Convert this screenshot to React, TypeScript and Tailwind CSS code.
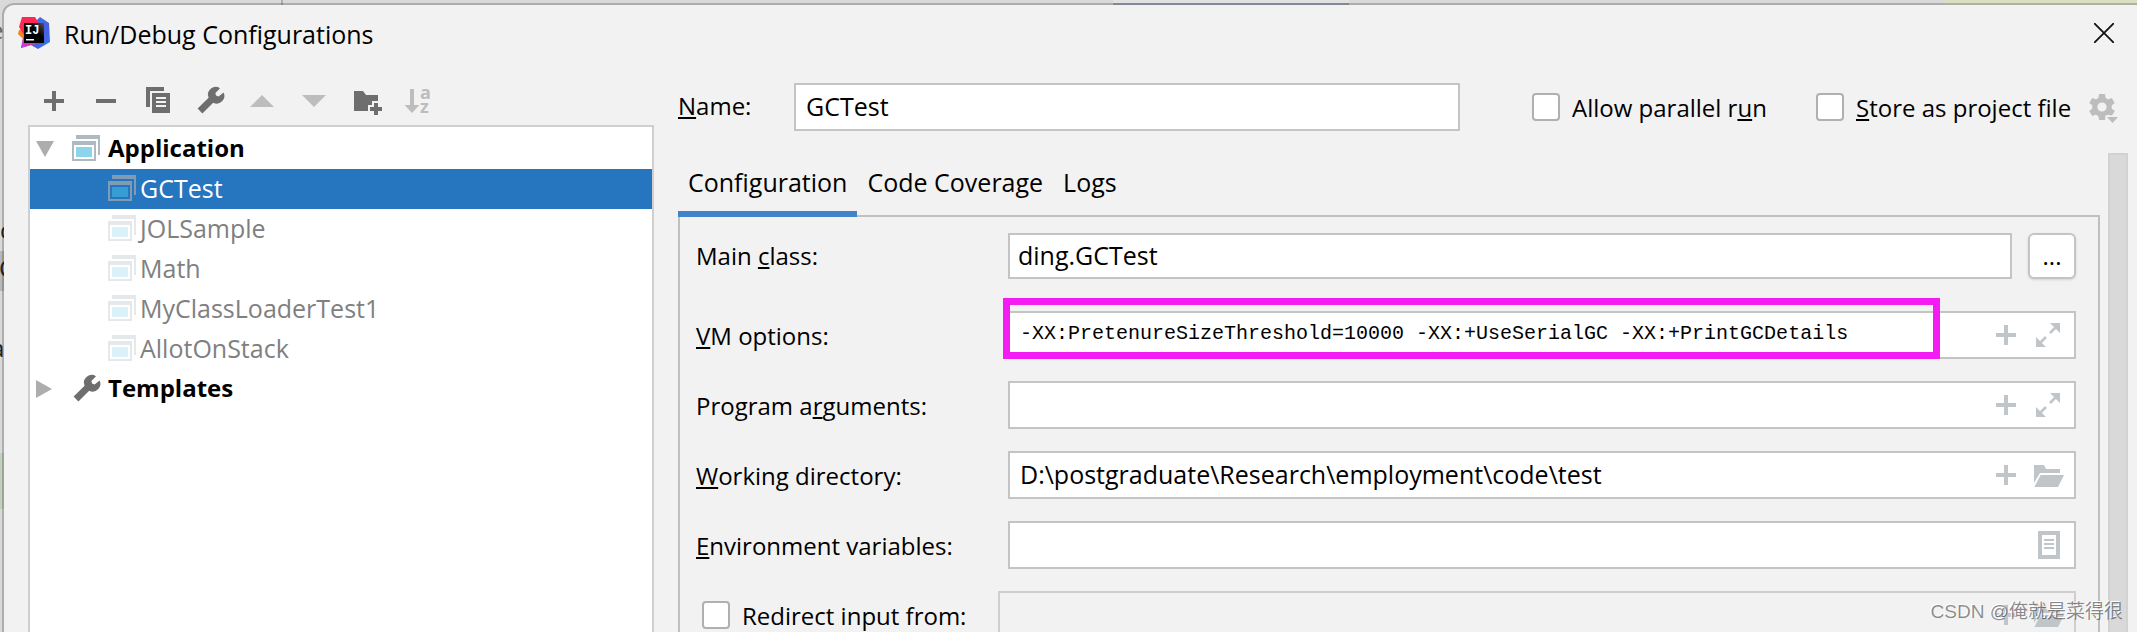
import type { ReactNode } from "react";

type IconProps = { className?: string; children: ReactNode };

function Icon({ className = "text-[#6e6e6e]", children }: IconProps) {
    return (
        <svg className={`w-8 h-8 shrink-0 ${className}`} viewBox="0 0 16 16" fill="currentColor" aria-hidden="true">
            {children}
        </svg>
    );
}

const plusPath = <path d="M7 3h2v4h4v2H9v4H7V9H3V7h4z" />;
const wrenchPath = <path d="M13 1.6 10.7 4l.3 1.3 1.3.4L14.8 3.7A3.9 3.9 0 0 1 9.6 8.9L4.2 14.2 1.8 11.8 7.3 6.4A3.9 3.9 0 0 1 13 1.6z" />;
const openFolderPath = <path d="M1 3h5l1 2h7v2H4L1 12zM4.3 8H16l-3 6H1.2z" />;

function AppIcon({ className = "" }: { className?: string }) {
    return (
        <Icon className={`text-[#aebac1] ${className}`}>
            <path d="M3 1h12v10h-1V3H3zM1 4h12v10H1zM2 6v7h10V6z" fillRule="evenodd" />
            <path d="M3 7h8v5H3z" fill="#40b6e0" fillOpacity="0.6" />
        </Icon>
    );
}

function SelectedAppIcon() {
    return (
        <Icon className="text-[#7f9bb5]">
            <path d="M3 1h12v10h-1V3H3zM1 4h12v10H1zM2 6v7h10V6z" fillRule="evenodd" />
            <path d="M3 7h8v5H3z" fill="#369cd3" />
        </Icon>
    );
}

function Logo() {
    return (
        <svg className="w-8 h-8 shrink-0" viewBox="0 0 32 32" aria-hidden="true">
            <defs>
                <linearGradient id="blue" x1="0" y1="0" x2="1" y2="1">
                    <stop offset="0" stopColor="#3b7bea" />
                    <stop offset="0.6" stopColor="#4a5fe0" />
                    <stop offset="1" stopColor="#2a7df0" />
                </linearGradient>
                <linearGradient id="purple" x1="0" y1="1" x2="1" y2="0">
                    <stop offset="0" stopColor="#b345f1" />
                    <stop offset="1" stopColor="#fe2857" />
                </linearGradient>
                <linearGradient id="black" x1="0" y1="1" x2="1" y2="0">
                    <stop offset="0" stopColor="#000" />
                    <stop offset="0.6" stopColor="#000" />
                    <stop offset="1" stopColor="#555" />
                </linearGradient>
            </defs>
            <path d="M17 5 22 0l9 6 1 19-12 7-9-5z" fill="url(#blue)" />
            <path d="M3 31 6 20 10 24l9 6-4-3z" fill="#a43fd0" />
            <path d="M1 13 8 11v12L3 20 0 17z" fill="#fc801d" />
            <path d="M4 0h13l5 8-6 12L6 18 1 10z" fill="#fe2857" />
            <path d="M3 31 5 20l6-2 6 9z" fill="url(#purple)" />
            <path d="M6 6h20v20H6z" fill="url(#black)" />
            <path d="M8 22h8v1.500H8z" fill="#fff" />
            <text x="7" y="17" fontSize="12" fontWeight="700" fill="#fff" fontFamily="Liberation Mono, monospace">IJ</text>
        </svg>
    );
}

function Tools() {
    return (
        <div className="flex flex-row gap-5 pl-[10px] pb-2">
            <button aria-label="Add"><Icon>{plusPath}</Icon></button>
            <button aria-label="Remove"><Icon><path d="M3 7h10v2H3z" /></Icon></button>
            <button aria-label="Copy">
                <Icon>
                    <path d="M2 1h9v2H4v8H2zM5 4h9v10H5zM7 6v1h5V6zM7 8v1h5V8zM7 10v1h5v-1z" fillRule="evenodd" />
                </Icon>
            </button>
            <button aria-label="Edit templates"><Icon>{wrenchPath}</Icon></button>
            <button aria-label="Move up"><Icon className="text-[#bdbdbd]"><path d="M2 11h12L8 5z" /></Icon></button>
            <button aria-label="Move down"><Icon className="text-[#bdbdbd]"><path d="M2 5h12l-6 6z" /></Icon></button>
            <button aria-label="New folder">
                <Icon>
                    <path d="M2 3h4.500L8 5h6v3h-3v2H9v3H2zM12 9h2v2h2v2h-2v2h-2v-2h-2v-2h2z" />
                </Icon>
            </button>
            <button aria-label="Sort">
                <Icon className="text-[#bdbdbd]">
                    <path d="M4 2h2v8h2.700L5 14 1.300 10H4z" />
                    <text x="9" y="7.200" fontSize="9" fontWeight="700" fontFamily="Open Sans, sans-serif">a</text>
                    <text x="9" y="14" fontSize="9" fontWeight="700" fontFamily="Open Sans, sans-serif">z</text>
                </Icon>
            </button>
        </div>
    );
}

const configs = ["GCTest", "JOLSample", "Math", "MyClassLoaderTest1", "AllotOnStack"];

function Tree() {
    return (
        <ul className="flex-1 bg-white border-2 border-[#cfcfcf] pt-[2px]">
            <li className="h-10 flex flex-row items-center pl-[6px] font-bold">
                <svg className="w-[18px] h-4 mr-4" viewBox="0 0 18 16" aria-hidden="true"><path d="M0 0h18L9 16z" fill="#adadad" /></svg>
                <AppIcon />
                <span className="pl-[6px] pb-[2px]">Application</span>
            </li>
            {configs.map((name, i) => (
                <li key={name} className={i === 0 ? "h-10 flex flex-row items-center pl-[76px] bg-[#2675bf] text-white" : "h-10 flex flex-row items-center pl-[76px] text-[#808080]"}>
                    {i === 0 ? <SelectedAppIcon /> : <AppIcon className="opacity-30" />}
                    <span className="pl-[2px] pb-[2px] text-[25px]">{name}</span>
                </li>
            ))}
            <li className="h-10 flex flex-row items-center pl-[6px] font-bold">
                <svg className="w-4 h-[18px] mr-[18px]" viewBox="0 0 16 18" aria-hidden="true"><path d="M0 0v18l16-9z" fill="#adadad" /></svg>
                <Icon>{wrenchPath}</Icon>
                <span className="pl-[6px] pb-[2px]">Templates</span>
            </li>
        </ul>
    );
}

// underlined mnemonic letter
function Key({ children }: { children: string }) {
    return <u className="decoration-2 underline-offset-2 [text-decoration-skip-ink:none]">{children}</u>;
}

const checkbox = "appearance-none w-7 h-7 shrink-0 bg-white border-2 border-[#b0b0b0] rounded";

type FieldProps = { id: string; label: ReactNode; value?: string; mono?: boolean; note?: ReactNode; children: ReactNode };

function Field({ id, label, value = "", mono = false, note, children }: FieldProps) {
    return (
        <div className="flex flex-row items-center">
            <label htmlFor={id} className="w-[312px] shrink-0 pt-[2px]">{label}</label>
            <div className="relative flex-1 h-12 flex flex-row items-center gap-[10px] bg-white border-2 border-[#c4c4c4] pl-[10px] pr-[10px]">
                <input id={id} className={mono ? "flex-1 min-w-0 pb-[2px] outline-none font-['Liberation_Mono',monospace] text-[20px]" : "flex-1 min-w-0 pb-[2px] outline-none text-[25px]"} defaultValue={value} />
                {children}
                {note}
            </div>
        </div>
    );
}

const pale = "text-[#bfc5c9]";

function AddButton() {
    return <button type="button" aria-label="Insert macro"><Icon className={pale}>{plusPath}</Icon></button>;
}

function ExpandButton() {
    return (
        <button type="button" aria-label="Expand">
            <Icon className={pale}>
                <path d="M9 2h5v5zM2 9v5h5z" />
                <path d="M9 7l3-3M7 9l-3 3" stroke="currentColor" strokeWidth="1.300" />
            </Icon>
        </button>
    );
}

function BrowseButton() {
    return <button type="button" aria-label="Browse"><Icon className={pale}>{openFolderPath}</Icon></button>;
}

function Panel() {
    return (
        <form className="flex-1 -mt-[2px] flex flex-col border-2 border-b-0 border-[#c0c0c0] pt-4 pl-4 pr-[22px]">
            <div className="flex flex-row items-center mb-8">
                <label htmlFor="main" className="w-[312px] shrink-0">Main <Key>c</Key>lass:</label>
                <input id="main" className="flex-1 h-[46px] bg-white border-2 border-[#c4c4c4] px-2 pb-[2px] outline-none text-[25px]" defaultValue="ding.GCTest" />
                <button type="button" className="ml-4 w-12 h-[46px] bg-white border-2 border-[#c4c4c4] rounded-md shadow-sm">...</button>
            </div>
            <div className="flex flex-col gap-[22px]">
                <Field
                    id="vm"
                    label={<><Key>V</Key>M options:</>}
                    value="-XX:PretenureSizeThreshold=10000 -XX:+UseSerialGC -XX:+PrintGCDetails"
                    mono
                    note={<div className="absolute -left-[7px] -top-[15px] right-[134px] -bottom-[2px] border-[7px] border-[#f31cf3] pointer-events-none" />}
                >
                    <AddButton />
                    <ExpandButton />
                </Field>
                <Field id="args" label={<>Program a<Key>r</Key>guments:</>}>
                    <AddButton />
                    <ExpandButton />
                </Field>
                <Field id="dir" label={<><Key>W</Key>orking directory:</>} value="D:\postgraduate\Research\employment\code\test">
                    <AddButton />
                    <BrowseButton />
                </Field>
                <Field id="env" label={<><Key>E</Key>nvironment variables:</>}>
                    <button type="button" aria-label="Edit variables">
                        <Icon className={pale}>
                            <path d="M3 1h11v14H3zM5 3v10h7V3zM6 5h5v1H6zM6 7h5v1H6zM6 9h5v1H6z" fillRule="evenodd" />
                        </Icon>
                    </button>
                </Field>
                <div className="flex flex-row items-center">
                    <label className="w-[302px] shrink-0 flex flex-row items-center gap-3 pl-[6px]">
                        <input type="checkbox" className={checkbox} />
                        <span className="pt-[2px]">Redirect input from:</span>
                    </label>
                    <div className="flex-1 h-12 flex flex-row items-center gap-[10px] border-2 border-[#cfcfcf] px-[10px]">
                        <input aria-label="Redirect input from" className="flex-1 min-w-0" disabled />
                        <AddButton />
                        <BrowseButton />
                    </div>
                </div>
            </div>
        </form>
    );
}

function Gear() {
    return (
        <Icon className="text-[#bdbdbd]">
            <circle cx="8" cy="8" r="3.600" fill="none" stroke="currentColor" strokeWidth="2.600" />
            {[0, 60, 120, 180, 240, 300].map((a) => (
                <path key={a} d="M6.500 1.500h3l.4 3H6.100z" transform={`rotate(${a} 8 8)`} />
            ))}
            <path d="M9.500 12.300H16V16h-4z" fill="#f2f2f2" />
            <path d="M10.500 13H16l-2.750 3z" />
        </Icon>
    );
}

function Editor() {
    return (
        <div className="flex-1 flex flex-col pt-[22px]">
            <div className="flex flex-row items-center pr-[19px]">
                <label htmlFor="name" className="w-[116px] shrink-0 pb-[2px]"><Key>N</Key>ame:</label>
                <input id="name" className="flex-1 h-12 bg-white border-2 border-[#c4c4c4] px-[10px] pb-[2px] outline-none text-[25px]" defaultValue="GCTest" />
                <label className="ml-[72px] w-[284px] flex flex-row items-center gap-3">
                    <input type="checkbox" className={checkbox} />
                    <span className="pt-[2px]">Allow parallel r<Key>u</Key>n</span>
                </label>
                <label className="w-[270px] flex flex-row items-center gap-3">
                    <input type="checkbox" className={checkbox} />
                    <span className="pt-[2px] whitespace-nowrap"><Key>S</Key>tore as project file</span>
                </label>
                <button aria-label="Storage options"><Gear /></button>
            </div>
            <div className="flex-1 flex flex-row gap-2 mt-[22px] pr-[9px]">
                <div className="flex-1 flex flex-col">
                    <div className="relative flex flex-row text-[25px]" role="tablist">
                        <button role="tab" aria-selected="true" className="h-16 px-[10px] border-b-[6px] border-[#4083c9]">Configuration</button>
                        <button role="tab" aria-selected="false" className="h-16 px-[10px] border-b-[6px] border-transparent">Code Coverage</button>
                        <button role="tab" aria-selected="false" className="h-16 px-[10px] border-b-[6px] border-transparent">Logs</button>
                    </div>
                    <Panel />
                </div>
                <div className="w-5 bg-[#d9d9d9] border-2 border-b-0 border-[#d2d2d2]" />
            </div>
        </div>
    );
}

// the slice of the editor window that shows past the dialog's edge
function Backdrop() {
    return (
        <div className="absolute inset-0 overflow-hidden bg-[#d9d9d9] text-[#222222]" aria-hidden="true">
            <div className="absolute left-[1113px] top-0 w-[236px] h-[5px] bg-[#e1e1e1] border-b-2 border-[#a3abbc]" />
            <div className="absolute left-[1943px] right-0 top-0 h-2 bg-[#dbdec4]" />
            <div className="absolute left-[281px] top-0 w-[2px] h-2 bg-[#b0b0b0]" />
            <div className="absolute left-0 top-[251px] w-1 h-10 bg-[#b8b8b8]" />
            <div className="absolute left-0 top-[453px] w-1 h-14 bg-[#c3d0bd]" />
            <span className="absolute -left-[10px] top-[14px] text-[#666666]">e</span>
            <span className="absolute left-0 top-[214px]">c</span>
            <span className="absolute -left-[1px] top-[252px]">C</span>
            <span className="absolute -left-[9px] top-[332px]">a</span>
        </div>
    );
}

export default function App() {
    return (
        <div className="relative h-screen overflow-hidden pl-[2px] pt-[3px] flex font-['Open_Sans','Noto_Sans',sans-serif] text-[24px] leading-8 text-black">
            <Backdrop />
            <div className="relative flex-1 flex flex-col bg-[#f2f2f2] bg-clip-padding border-l-2 border-t-2 border-black/20 rounded-tl-xl">
                <header className="h-14 shrink-0 flex flex-row items-center pl-[14px] pr-[23px]">
                    <Logo />
                    <h1 className="flex-1 pl-[14px] pt-[2px] text-[25px]">Run/Debug Configurations</h1>
                    <button aria-label="Close">
                        <svg className="w-5 h-5" viewBox="0 0 20 20" fill="none" stroke="#111" strokeWidth="1.800" aria-hidden="true"><path d="M0 0l20 20M20 0L0 20" /></svg>
                    </button>
                </header>
                <main className="flex-1 flex flex-row gap-6 pl-6">
                    <div className="w-[626px] shrink-0 flex flex-col pt-6">
                        <Tools />
                        <Tree />
                    </div>
                    <Editor />
                </main>
            </div>
            <p className="absolute right-[14px] bottom-1 text-[19px] text-black/45 font-['Liberation_Sans','Noto_Sans_CJK_SC',sans-serif] [text-shadow:-1px_-1px_0_#ffffff]">CSDN @俺就是菜得很</p>
        </div>
    );
}
